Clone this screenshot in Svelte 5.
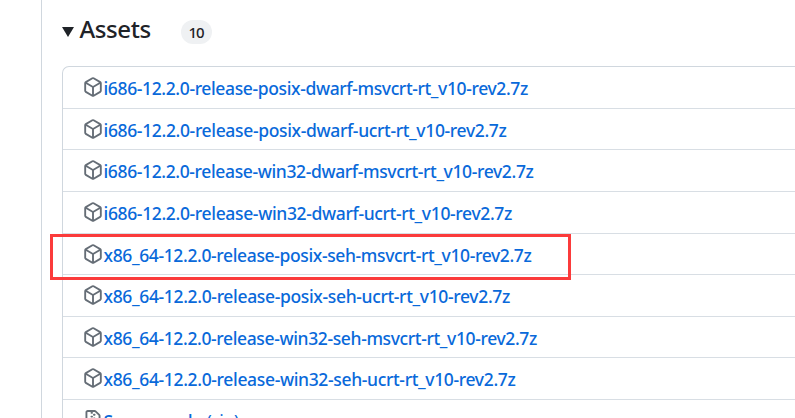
<script>
  const assets = [
    { name: 'i686-12.2.0-release-posix-dwarf-msvcrt-rt_v10-rev2.7z', width: 424.5 },
    { name: 'i686-12.2.0-release-posix-dwarf-ucrt-rt_v10-rev2.7z', width: 403 },
    { name: 'i686-12.2.0-release-win32-dwarf-msvcrt-rt_v10-rev2.7z', width: 430 },
    { name: 'i686-12.2.0-release-win32-dwarf-ucrt-rt_v10-rev2.7z', width: 408.5 },
    { name: 'x86_64-12.2.0-release-posix-seh-msvcrt-rt_v10-rev2.7z', width: 428, marked: true },
    { name: 'x86_64-12.2.0-release-posix-seh-ucrt-rt_v10-rev2.7z', width: 406.5 },
    { name: 'x86_64-12.2.0-release-win32-seh-msvcrt-rt_v10-rev2.7z', width: 433.5 },
    { name: 'x86_64-12.2.0-release-win32-seh-ucrt-rt_v10-rev2.7z', width: 412 },
    { name: 'Source code', note: '(zip)', width: 135.5, zip: true }
  ];

  function fit(node, width) {
    const natural = node.getBoundingClientRect().width;
    node.style.letterSpacing = (width - natural) / node.textContent.length + 'px';
  }
</script>

<main class="page">
  <section class="release">
    <header>
      <svg class="caret" width="12" height="10" viewBox="0 0 12 10"><path d="M0 0h12L6 10z" /></svg>
      <h3>Assets</h3>
      <span class="counter">10</span>
    </header>
    <ul>
      {#each assets as asset}
        <li>
          {#if asset.zip}
            <svg class="icon" viewBox="0 0 16 16"><path d="M3.5 1.75v11.5c0 .09.048.173.126.217a.75.75 0 0 1-.752 1.298A1.748 1.748 0 0 1 2 13.25V1.75C2 .784 2.784 0 3.75 0h5.586c.464 0 .909.185 1.237.513l2.914 2.914c.329.328.513.773.513 1.237v8.586A1.75 1.75 0 0 1 12.25 15h-.5a.75.75 0 0 1 0-1.5h.5a.25.25 0 0 0 .25-.25V4.664a.25.25 0 0 0-.073-.177L9.513 1.573a.25.25 0 0 0-.177-.073H7.25a.75.75 0 0 1 0 1.5h-.5a.75.75 0 0 1 0-1.5h-3a.25.25 0 0 0-.25.25Zm3.75 8.75h.5c.966 0 1.75.784 1.75 1.75v3a.75.75 0 0 1-.75.75h-2.5a.75.75 0 0 1-.75-.75v-3c0-.966.784-1.75 1.75-1.75ZM6 5.25a.75.75 0 0 1 .75-.75h.5a.75.75 0 0 1 0 1.5h-.5A.75.75 0 0 1 6 5.25Zm.75 2.25h.5a.75.75 0 0 1 0 1.5h-.5a.75.75 0 0 1 0-1.5ZM8 6.75A.75.75 0 0 1 8.75 6h.5a.75.75 0 0 1 0 1.5h-.5A.75.75 0 0 1 8 6.75ZM8.75 3h.5a.75.75 0 0 1 0 1.5h-.5a.75.75 0 0 1 0-1.5ZM8 9.75A.75.75 0 0 1 8.75 9h.5a.75.75 0 0 1 0 1.5h-.5A.75.75 0 0 1 8 9.75Z" /></svg>
          {:else}
            <svg class="icon" viewBox="0 0 16 16"><path d="m8.878.392 5.25 3.045c.54.314.872.89.872 1.514v6.098a1.75 1.75 0 0 1-.872 1.514l-5.25 3.045a1.75 1.75 0 0 1-1.756 0l-5.25-3.045A1.75 1.75 0 0 1 1 11.049V4.951c0-.624.332-1.201.872-1.514L7.122.392a1.75 1.75 0 0 1 1.756 0ZM7.875 1.69l-4.63 2.685L8 7.133l4.755-2.758-4.63-2.685a.248.248 0 0 0-.25 0ZM2.5 5.677v5.372c0 .09.047.171.125.216l4.625 2.683V8.432Zm6.25 8.271 4.625-2.683a.25.25 0 0 0 .125-.216V5.677L8.75 8.432Z" /></svg>
          {/if}
          <a href="#asset"><span use:fit={asset.width}>{asset.name}{#if asset.note}<small>&nbsp;{asset.note}</small>{/if}</span></a>
          {#if asset.marked}<div class="marker"></div>{/if}
        </li>
      {/each}
    </ul>
  </section>
</main>

<style>
  :global(body) { overflow: hidden; background: #fff; }
  .page {
    box-sizing: border-box;
    height: 418px;
    overflow: hidden;
    padding-left: 41px;
    font-family: "Noto Sans", "Open Sans", sans-serif;
    color: #1f2328;
  }
  .release {
    box-sizing: border-box;
    height: 418px;
    border-left: 1px solid #d0d7de;
    padding-left: 20px;
  }
  header { display: flex; align-items: center; height: 66px; box-sizing: border-box; padding-bottom: 3px; }
  .caret { display: block; fill: #1f2328; flex: none; }
  h3 { margin: -6px 0 0 5.5px; width: 101.5px; font-size: 24px; line-height: 36px; font-weight: 500; letter-spacing: -0.4px; }
  .counter {
    box-sizing: border-box;
    width: 31px;
    height: 24px;
    border-radius: 12px;
    background: #eff1f3;
    font-size: 15px;
    font-weight: 500;
    line-height: 25px;
    text-align: center;
    letter-spacing: -1px;
    padding-right: 1px;
  }
  ul {
    box-sizing: border-box;
    margin: 0;
    padding: 0;
    height: 400px;
    list-style: none;
    border: 1px solid #d0d7de;
    border-right: 0;
    border-top-left-radius: 7px;
  }
  li {
    position: relative;
    box-sizing: border-box;
    display: flex;
    align-items: center;
    height: 41.6px;
    padding: 0 0 0.6px 20px;
    border-top: 1px solid #d8dee4;
  }
  li:first-child { border-top: 0; height: 40.75px; padding-bottom: 0; }
  .icon { width: 20px; height: 20px; flex: none; fill: #656d76; }
  a { color: #0969da; font-size: 17.5px; font-weight: 500; line-height: 26px; white-space: nowrap; text-decoration: none; padding: 2px 0 0 0.5px; }
  a span { display: inline-block; }
  small { font-size: inherit; font-weight: 400; }
  .marker {
    position: absolute;
    left: -13px;
    top: 0;
    box-sizing: border-box;
    width: 521px;
    height: 46px;
    border: 3px solid #fb3b3b;
    z-index: 1;
  }
</style>
